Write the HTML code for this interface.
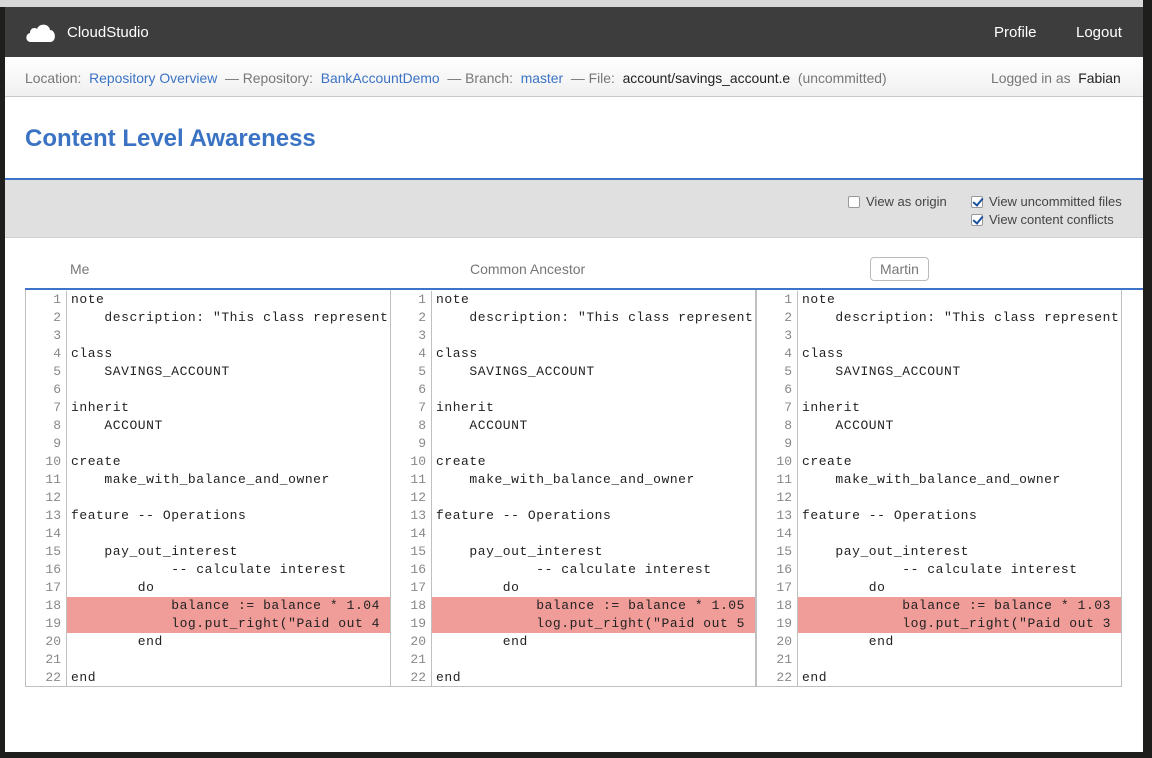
<!DOCTYPE html>
<html><head><meta charset="utf-8"><style>
*{margin:0;padding:0;box-sizing:border-box}
body{width:1152px;height:758px;background:#1e1e1c;position:relative;overflow:hidden;font-family:"Liberation Sans",sans-serif}
#topstrip{position:absolute;left:0;top:0;width:1143px;height:7px;background:#d8d8d8}
#win{position:absolute;left:5px;top:7px;width:1138px;height:745px;background:#fff;overflow:hidden}
#nav{height:50px;background:#3d3d3d;color:#fff;position:relative}
#nav .brand{position:absolute;left:62px;top:17px;font-size:15px}
#nav .r{position:absolute;top:17px;font-size:15px}
#crumb{height:40px;background:linear-gradient(#fff,#f0f0f0);border-bottom:1px solid #c8c8c8;font-size:13.9px;color:#777;padding:13px 0 0 20px;position:relative;white-space:nowrap}
#crumb a{color:#3b73c4;text-decoration:none}
#crumb b{color:#222;font-weight:normal}
#title{height:83px;border-bottom:2px solid #3d74c7;padding:28px 0 0 20px;font-size:24px;font-weight:bold;color:#3b73c4}
#opts{height:58px;background:#e0e0e0;border-bottom:1px solid #d0d0d0;position:relative;font-size:13px;color:#444}
.cb{position:absolute;display:flex;align-items:center}
.box{width:12px;height:12px;border:1px solid #999;border-radius:2px;background:#fff;margin-right:6px;position:relative}
.box.on::after{content:"";position:absolute;left:3px;top:-1px;width:4px;height:8px;border:solid #1c4f9c;border-width:0 2px 2px 0;transform:rotate(40deg)}
.lbl{position:absolute;top:254px;font-size:14px;color:#777}
#blue{position:absolute;left:20px;top:281px;width:1120px;height:2px;background:#3d74c7}
.panel{position:absolute;top:283px;width:366px;height:397px;border:1px solid #c0c0c0;border-top:none;font-family:"Liberation Mono",monospace;font-size:13px;background:#fff;overflow:hidden;padding-top:1px}
.row{height:18px;line-height:18px;display:flex;white-space:pre}
.n{width:41px;text-align:right;padding-right:5px;color:#888;border-right:1px solid #c0c0c0;flex:none;background:#fff}
.c{padding-left:4px;color:#222;flex:1;letter-spacing:0.55px}
.hl .c{background:#f09d99}
</style></head><body>
<div id="topstrip"></div>
<div id="win">
<div id="nav">
<svg style="position:absolute;left:20px;top:15px" width="31" height="20" viewBox="0 0 31 20"><path d="M6 20 C0 20 0 12 5 11 C5 6 10 5 12 7 C14 1 24 1 25 8 C31 8 32 20 25 20 Z" fill="#fff"/></svg>
<span class="brand">CloudStudio</span>
<span class="r" style="left:989px">Profile</span>
<span class="r" style="left:1071px">Logout</span>
</div>
<div id="crumb">Location: &nbsp;<a>Repository Overview</a> &nbsp;— Repository: &nbsp;<a>BankAccountDemo</a> &nbsp;— Branch: &nbsp;<a>master</a> &nbsp;— File: &nbsp;<b>account/savings_account.e</b> &nbsp;(uncommitted)
<span style="position:absolute;left:986px;top:13px">Logged in as &nbsp;<b>Fabian</b></span></div>
<div id="title">Content Level Awareness</div>
<div id="opts">
<div class="cb" style="left:843px;top:14px"><span class="box"></span>View as origin</div>
<div class="cb" style="left:966px;top:14px"><span class="box on"></span>View uncommitted files</div>
<div class="cb" style="left:966px;top:32px"><span class="box on"></span>View content conflicts</div>
</div>
<div class="lbl" style="left:65px">Me</div>
<div class="lbl" style="left:465px">Common Ancestor</div>
<div class="lbl" style="left:865px;top:250px;border:1px solid #bbb;border-radius:4px;padding:3px 9px;background:#fff">Martin</div>
<div id="blue"></div>
<div class="panel" style="left:20px" id="p1"></div>
<div class="panel" style="left:385px" id="p2"></div>
<div class="panel" style="left:751px" id="p3"></div>
</div>
<script>
function build(id,v,w){var L=['note','    description: "This class represent','','class','    SAVINGS_ACCOUNT','','inherit','    ACCOUNT','','create','    make_with_balance_and_owner','','feature -- Operations','','    pay_out_interest','            -- calculate interest','        do','            balance := balance * '+v,'            log.put_right("Paid out '+w,'        end','','end'];
var h='';L.forEach(function(t,i){h+='<div class="row'+(i==17||i==18?' hl':'')+'"><span class="n">'+(i+1)+'</span><span class="c">'+t.replace(/&/g,'&amp;').replace(/</g,'&lt;')+'</span></div>'});
document.getElementById(id).innerHTML=h;}
build('p1','1.04','4');build('p2','1.05','5');build('p3','1.03','3');
</script>
</body></html>
